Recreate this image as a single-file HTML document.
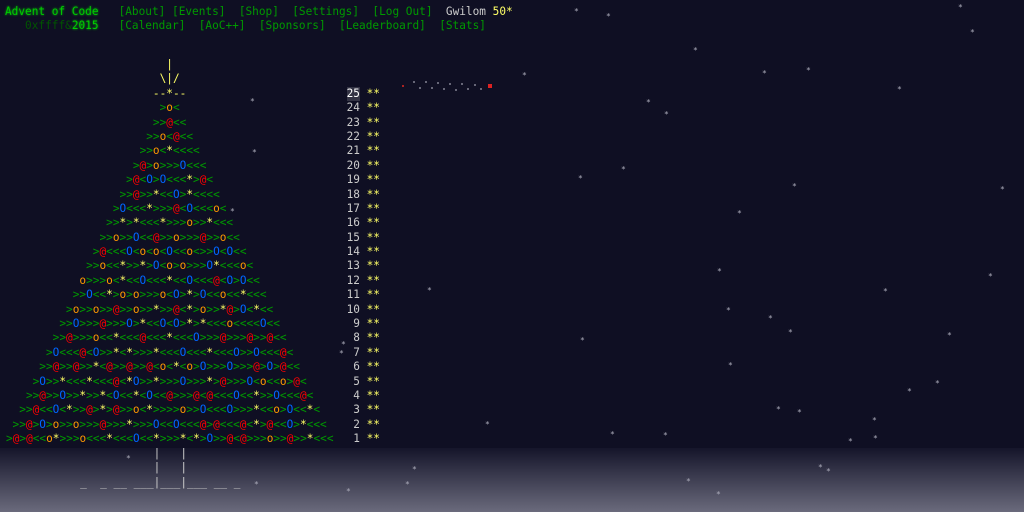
<!DOCTYPE html>
<html><head><meta charset="utf-8"><style>
html,body{margin:0;padding:0;background:#0f0f23;width:1024px;height:512px;overflow:hidden;position:relative}
body{font-family:"DejaVu Sans Mono","Liberation Mono",monospace;font-size:11.1px;line-height:14.4px;color:#cccccc}
i{font-style:normal}
.ground{position:absolute;left:0;top:448px;width:1024px;height:64px;background:linear-gradient(#15152a,#6a6a7c)}
.hdr{position:absolute;left:5px;top:5px;white-space:pre}
.g{color:#00cc00;text-shadow:0 0 2px #00cc00}
.n{color:#009900}
.dg{color:#005500}
.yl{color:#ffff66}
.tree{position:absolute;left:6px;top:58px}
.row{height:14.4px;white-space:nowrap;overflow:hidden}
.t{display:inline-block;width:49ch;text-align:center;color:#009900}
.num{display:inline-block;width:2ch;text-align:right;margin-left:2ch;color:#cccccc}
.st{color:#ffff66;margin-left:1ch}
.a{color:#ff9900}.r{color:#ff0000}.b{color:#0066ff}.y{color:#ffff66}
.s{position:absolute;color:#aaaab8;font-size:8px;line-height:8px}
.d{position:absolute;width:2px;height:2px;background:#666677}
.trunk{position:absolute;left:0px;top:447px;white-space:pre;color:#cccccc}
</style></head><body>
<div class="ground"></div>
<div class="hdr"><span class="g">Advent of Code</span>   <span class="n">[About]</span> <span class="n">[Events]</span>  <span class="n">[Shop]</span>  <span class="n">[Settings]</span>  <span class="n">[Log Out]</span>  <span>Gwilom</span> <span class="yl">50*</span>
   <span class="dg">0xffff&amp;</span><span class="g">2015</span>   <span class="n">[Calendar]</span>  <span class="n">[AoC++]</span>  <span class="n">[Sponsors]</span>  <span class="n">[Leaderboard]</span>  <span class="n">[Stats]</span></div>

<div class="tree">
<div class="row"><span class="t y">|</span></div>
<div class="row"><span class="t y">\|/</span></div>
<div class="row"><span class="t y">--*--</span><span class="num" style="color:#fff;background:#333344">25</span><span class="st">**</span></div>
<div class="row"><span class="t">&gt;<i class="a">o</i>&lt;</span><span class="num">24</span><span class="st">**</span></div>
<div class="row"><span class="t">&gt;&gt;<i class="r">@</i>&lt;&lt;</span><span class="num">23</span><span class="st">**</span></div>
<div class="row"><span class="t">&gt;&gt;<i class="a">o</i>&lt;<i class="r">@</i>&lt;&lt;</span><span class="num">22</span><span class="st">**</span></div>
<div class="row"><span class="t">&gt;&gt;<i class="a">o</i>&lt;<i class="y">*</i>&lt;&lt;&lt;&lt;</span><span class="num">21</span><span class="st">**</span></div>
<div class="row"><span class="t">&gt;<i class="r">@</i>&gt;<i class="a">o</i>&gt;&gt;&gt;<i class="b">O</i>&lt;&lt;&lt;</span><span class="num">20</span><span class="st">**</span></div>
<div class="row"><span class="t">&gt;<i class="r">@</i>&lt;<i class="b">O</i>&gt;<i class="b">O</i>&lt;&lt;&lt;<i class="y">*</i>&gt;<i class="r">@</i>&lt;</span><span class="num">19</span><span class="st">**</span></div>
<div class="row"><span class="t">&gt;&gt;<i class="r">@</i>&gt;&gt;<i class="y">*</i>&lt;&lt;<i class="b">O</i>&gt;<i class="y">*</i>&lt;&lt;&lt;&lt;</span><span class="num">18</span><span class="st">**</span></div>
<div class="row"><span class="t">&gt;<i class="b">O</i>&lt;&lt;&lt;<i class="y">*</i>&gt;&gt;&gt;<i class="r">@</i>&lt;<i class="b">O</i>&lt;&lt;&lt;<i class="a">o</i>&lt;</span><span class="num">17</span><span class="st">**</span></div>
<div class="row"><span class="t">&gt;&gt;<i class="y">*</i>&gt;<i class="y">*</i>&lt;&lt;&lt;<i class="y">*</i>&gt;&gt;&gt;<i class="a">o</i>&gt;&gt;<i class="y">*</i>&lt;&lt;&lt;</span><span class="num">16</span><span class="st">**</span></div>
<div class="row"><span class="t">&gt;&gt;<i class="a">o</i>&gt;&gt;<i class="b">O</i>&lt;&lt;<i class="r">@</i>&gt;&gt;<i class="a">o</i>&gt;&gt;&gt;<i class="r">@</i>&gt;&gt;<i class="a">o</i>&lt;&lt;</span><span class="num">15</span><span class="st">**</span></div>
<div class="row"><span class="t">&gt;<i class="r">@</i>&lt;&lt;&lt;<i class="b">O</i>&lt;<i class="a">o</i>&lt;<i class="a">o</i>&lt;<i class="b">O</i>&lt;&lt;<i class="a">o</i>&lt;&gt;&gt;<i class="b">O</i>&lt;<i class="b">O</i>&lt;&lt;</span><span class="num">14</span><span class="st">**</span></div>
<div class="row"><span class="t">&gt;&gt;<i class="a">o</i>&lt;&lt;<i class="y">*</i>&gt;&gt;<i class="y">*</i>&gt;<i class="b">O</i>&lt;<i class="a">o</i>&gt;<i class="a">o</i>&gt;&gt;&gt;<i class="b">O</i><i class="y">*</i>&lt;&lt;&lt;<i class="a">o</i>&lt;</span><span class="num">13</span><span class="st">**</span></div>
<div class="row"><span class="t"><i class="a">o</i>&gt;&gt;&gt;<i class="a">o</i>&lt;<i class="y">*</i>&lt;&lt;<i class="b">O</i>&lt;&lt;&lt;<i class="y">*</i>&lt;&lt;<i class="b">O</i>&lt;&lt;&lt;<i class="r">@</i>&lt;<i class="b">O</i>&gt;<i class="b">O</i>&lt;&lt;</span><span class="num">12</span><span class="st">**</span></div>
<div class="row"><span class="t">&gt;&gt;<i class="b">O</i>&lt;&lt;<i class="y">*</i>&gt;<i class="a">o</i>&gt;<i class="a">o</i>&gt;&gt;&gt;<i class="a">o</i>&lt;<i class="b">O</i>&gt;<i class="y">*</i>&gt;<i class="b">O</i>&lt;&lt;<i class="a">o</i>&lt;&lt;<i class="y">*</i>&lt;&lt;&lt;</span><span class="num">11</span><span class="st">**</span></div>
<div class="row"><span class="t">&gt;<i class="a">o</i>&gt;&gt;<i class="a">o</i>&gt;&gt;<i class="r">@</i>&gt;&gt;<i class="a">o</i>&gt;&gt;<i class="y">*</i>&gt;&gt;<i class="r">@</i>&lt;<i class="y">*</i>&gt;<i class="a">o</i>&gt;&gt;<i class="y">*</i><i class="r">@</i>&gt;<i class="b">O</i>&lt;<i class="y">*</i>&lt;&lt;</span><span class="num">10</span><span class="st">**</span></div>
<div class="row"><span class="t">&gt;&gt;<i class="b">O</i>&gt;&gt;&gt;<i class="r">@</i>&gt;&gt;&gt;<i class="b">O</i>&gt;<i class="y">*</i>&lt;&lt;<i class="b">O</i>&lt;<i class="b">O</i>&gt;<i class="y">*</i>&gt;<i class="y">*</i>&lt;&lt;&lt;<i class="a">o</i>&lt;&lt;&lt;&lt;<i class="b">O</i>&lt;&lt;</span><span class="num">9</span><span class="st">**</span></div>
<div class="row"><span class="t">&gt;&gt;<i class="r">@</i>&gt;&gt;&gt;<i class="a">o</i>&lt;&lt;<i class="y">*</i>&lt;&lt;&lt;<i class="r">@</i>&lt;&lt;&lt;<i class="y">*</i>&lt;&lt;&lt;<i class="b">O</i>&gt;&gt;&gt;<i class="r">@</i>&gt;&gt;&gt;<i class="r">@</i>&gt;&gt;<i class="r">@</i>&lt;&lt;</span><span class="num">8</span><span class="st">**</span></div>
<div class="row"><span class="t">&gt;<i class="b">O</i>&lt;&lt;&lt;<i class="r">@</i>&lt;<i class="b">O</i>&gt;&gt;<i class="y">*</i>&lt;<i class="y">*</i>&gt;&gt;&gt;<i class="y">*</i>&lt;&lt;&lt;<i class="b">O</i>&lt;&lt;&lt;<i class="y">*</i>&lt;&lt;&lt;<i class="b">O</i>&gt;&gt;<i class="b">O</i>&lt;&lt;&lt;<i class="r">@</i>&lt;</span><span class="num">7</span><span class="st">**</span></div>
<div class="row"><span class="t">&gt;&gt;<i class="r">@</i>&gt;&gt;<i class="r">@</i>&gt;&gt;<i class="y">*</i>&lt;<i class="r">@</i>&gt;&gt;<i class="r">@</i>&gt;&gt;<i class="r">@</i>&lt;<i class="a">o</i>&lt;<i class="y">*</i>&lt;<i class="a">o</i>&gt;<i class="b">O</i>&gt;&gt;&gt;<i class="b">O</i>&gt;&gt;&gt;<i class="r">@</i>&gt;<i class="b">O</i>&gt;<i class="r">@</i>&lt;&lt;</span><span class="num">6</span><span class="st">**</span></div>
<div class="row"><span class="t">&gt;<i class="b">O</i>&gt;&gt;<i class="y">*</i>&lt;&lt;&lt;<i class="y">*</i>&lt;&lt;&lt;<i class="r">@</i>&lt;<i class="y">*</i><i class="b">O</i>&gt;&gt;<i class="y">*</i>&gt;&gt;&gt;<i class="b">O</i>&gt;&gt;&gt;<i class="y">*</i>&gt;<i class="r">@</i>&gt;&gt;&gt;<i class="b">O</i>&lt;<i class="a">o</i>&lt;&lt;<i class="a">o</i>&gt;<i class="r">@</i>&lt;</span><span class="num">5</span><span class="st">**</span></div>
<div class="row"><span class="t">&gt;&gt;<i class="r">@</i>&gt;&gt;<i class="b">O</i>&gt;&gt;<i class="y">*</i>&gt;&gt;<i class="y">*</i>&lt;<i class="b">O</i>&lt;&lt;<i class="y">*</i>&lt;<i class="b">O</i>&lt;&lt;<i class="r">@</i>&gt;&gt;&gt;<i class="r">@</i>&lt;<i class="r">@</i>&lt;&lt;&lt;<i class="b">O</i>&lt;&lt;<i class="y">*</i>&gt;&gt;<i class="b">O</i>&lt;&lt;&lt;<i class="r">@</i>&lt;</span><span class="num">4</span><span class="st">**</span></div>
<div class="row"><span class="t">&gt;&gt;<i class="r">@</i>&lt;&lt;<i class="b">O</i>&lt;<i class="y">*</i>&gt;&gt;<i class="r">@</i>&gt;<i class="y">*</i>&gt;<i class="r">@</i>&gt;&gt;<i class="a">o</i>&lt;<i class="y">*</i>&gt;&gt;&gt;&gt;<i class="a">o</i>&gt;&gt;<i class="b">O</i>&lt;&lt;&lt;<i class="b">O</i>&gt;&gt;&gt;<i class="y">*</i>&lt;&lt;<i class="a">o</i>&gt;<i class="b">O</i>&lt;&lt;<i class="y">*</i>&lt;</span><span class="num">3</span><span class="st">**</span></div>
<div class="row"><span class="t">&gt;&gt;<i class="r">@</i>&gt;<i class="b">O</i>&gt;<i class="a">o</i>&gt;&gt;<i class="a">o</i>&gt;&gt;&gt;<i class="r">@</i>&gt;&gt;&gt;<i class="y">*</i>&gt;&gt;&gt;<i class="b">O</i>&lt;&lt;<i class="b">O</i>&lt;&lt;&lt;<i class="r">@</i>&gt;<i class="r">@</i>&lt;&lt;&lt;<i class="r">@</i>&lt;<i class="y">*</i>&gt;<i class="r">@</i>&lt;&lt;<i class="b">O</i>&gt;<i class="y">*</i>&lt;&lt;&lt;</span><span class="num">2</span><span class="st">**</span></div>
<div class="row"><span class="t">&gt;<i class="r">@</i>&gt;<i class="r">@</i>&lt;&lt;<i class="a">o</i><i class="y">*</i>&gt;&gt;&gt;<i class="a">o</i>&lt;&lt;&lt;<i class="y">*</i>&lt;&lt;&lt;<i class="b">O</i>&lt;&lt;<i class="y">*</i>&gt;&gt;&gt;<i class="y">*</i>&lt;<i class="y">*</i>&gt;<i class="b">O</i>&gt;&gt;<i class="r">@</i>&lt;<i class="r">@</i>&gt;&gt;&gt;<i class="a">o</i>&gt;&gt;<i class="r">@</i>&gt;&gt;<i class="y">*</i>&lt;&lt;&lt;</span><span class="num">1</span><span class="st">**</span></div>
</div>

<div class="trunk">                       |   |
                       |   |
            _  _ __ ___|___|___ __ _</div>

<div class="d" style="left:402px;top:85px;background:#aa2222"></div>
<div class="d" style="left:413px;top:81px"></div>
<div class="d" style="left:419px;top:87px"></div>
<div class="d" style="left:425px;top:81px"></div>
<div class="d" style="left:431px;top:87px"></div>
<div class="d" style="left:437px;top:82px"></div>
<div class="d" style="left:443px;top:88px"></div>
<div class="d" style="left:449px;top:83px"></div>
<div class="d" style="left:455px;top:89px"></div>
<div class="d" style="left:461px;top:83px"></div>
<div class="d" style="left:467px;top:88px"></div>
<div class="d" style="left:474px;top:84px"></div>
<div class="d" style="left:480px;top:88px"></div>
<div class="d" style="left:488px;top:84px;width:4px;height:4px;background:#dd2222"></div>

<span class="s" style="left:574px;top:8px">*</span>
<span class="s" style="left:606px;top:13px">*</span>
<span class="s" style="left:958px;top:4px">*</span>
<span class="s" style="left:970px;top:29px">*</span>
<span class="s" style="left:693px;top:47px">*</span>
<span class="s" style="left:522px;top:72px">*</span>
<span class="s" style="left:762px;top:70px">*</span>
<span class="s" style="left:806px;top:67px">*</span>
<span class="s" style="left:897px;top:86px">*</span>
<span class="s" style="left:250px;top:98px">*</span>
<span class="s" style="left:646px;top:99px">*</span>
<span class="s" style="left:664px;top:111px">*</span>
<span class="s" style="left:252px;top:149px">*</span>
<span class="s" style="left:578px;top:175px">*</span>
<span class="s" style="left:621px;top:166px">*</span>
<span class="s" style="left:1000px;top:186px">*</span>
<span class="s" style="left:792px;top:183px">*</span>
<span class="s" style="left:737px;top:210px">*</span>
<span class="s" style="left:230px;top:208px">*</span>
<span class="s" style="left:717px;top:268px">*</span>
<span class="s" style="left:988px;top:273px">*</span>
<span class="s" style="left:427px;top:287px">*</span>
<span class="s" style="left:883px;top:288px">*</span>
<span class="s" style="left:726px;top:307px">*</span>
<span class="s" style="left:768px;top:315px">*</span>
<span class="s" style="left:580px;top:337px">*</span>
<span class="s" style="left:788px;top:329px">*</span>
<span class="s" style="left:947px;top:332px">*</span>
<span class="s" style="left:341px;top:341px">*</span>
<span class="s" style="left:339px;top:350px">*</span>
<span class="s" style="left:728px;top:362px">*</span>
<span class="s" style="left:935px;top:380px">*</span>
<span class="s" style="left:907px;top:388px">*</span>
<span class="s" style="left:776px;top:406px">*</span>
<span class="s" style="left:797px;top:409px">*</span>
<span class="s" style="left:872px;top:417px">*</span>
<span class="s" style="left:485px;top:421px">*</span>
<span class="s" style="left:610px;top:431px">*</span>
<span class="s" style="left:663px;top:432px">*</span>
<span class="s" style="left:848px;top:438px">*</span>
<span class="s" style="left:873px;top:435px">*</span>
<span class="s" style="left:126px;top:455px">*</span>
<span class="s" style="left:412px;top:466px">*</span>
<span class="s" style="left:818px;top:464px">*</span>
<span class="s" style="left:826px;top:468px">*</span>
<span class="s" style="left:405px;top:481px">*</span>
<span class="s" style="left:254px;top:481px">*</span>
<span class="s" style="left:346px;top:488px">*</span>
<span class="s" style="left:686px;top:478px">*</span>
<span class="s" style="left:716px;top:491px">*</span>
</body></html>
